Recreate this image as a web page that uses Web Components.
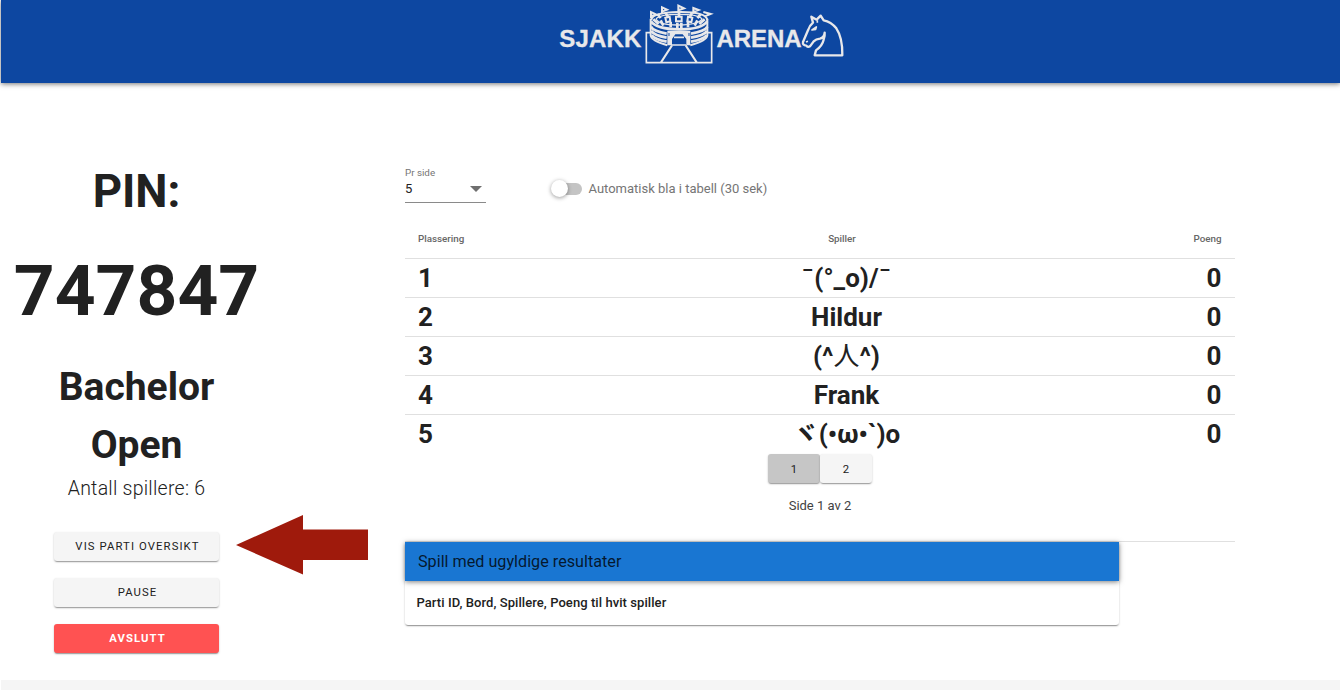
<!DOCTYPE html>
<html lang="no">
<head>
<meta charset="utf-8">
<title>Sjakkarena</title>
<style>
html,body{margin:0;height:100%}
body{font-family:Roboto,"Noto Sans CJK JP",sans-serif;color:#212121;background:#fff;overflow:hidden}
</style>
</head>
<body>
<arena-app></arena-app>
<script>
function define(name, html) {
  const t = document.createElement('template');
  t.innerHTML = html;
  customElements.define(name, class extends HTMLElement {
    constructor() {
      super();
      this.attachShadow({mode: 'open'}).append(t.content.cloneNode(true));
    }
  });
}

define('arena-logo', `
<style>:host{display:block;width:290px;height:66px}svg{display:block}text{font:bold 24px "Liberation Sans",Arial,sans-serif;fill:#e8e8ea;stroke:#e8e8ea;stroke-width:.3px}</style>
<svg width="290" height="66" viewBox="556 0 290 66" fill="none" stroke="#e8e8ea">
  <text x="559.3" y="46.500" textLength="82" lengthAdjust="spacing">SJAKK</text>
  <text x="716.5" y="46.500" textLength="85" lengthAdjust="spacing">ARENA</text>
  <g transform="translate(550 0) scale(.33333)" stroke-width="5">
    <path d="M302 98H289V188H485V98H472" stroke-width="5"/>
    <path d="M333 187L366 136M440 187L407 136" stroke-width="6"/>
    <path d="M352 92H421V136H409V117L398 103H376L366 117V136H352Z" fill="#e8e8ea" stroke="none"/>
    <path d="M357 99V108M417 99V108" stroke="#0d47a1" stroke-width="3"/>
    <path d="M372 112H402M366 135H408" stroke-width="5"/>
    <path d="M302 56V106Q304 122 352 136M472 56V106Q470 122 421 136" stroke-width="6"/>
    <path d="M303 64Q320 87 387 88T472 64M303 80Q310 94 350 101M472 80Q465 94 423 101M304 93Q312 106 350 113M471 93Q463 106 423 113M305 106Q315 118 350 125M470 106Q460 118 423 125" stroke-width="8"/>
    <path d="M304 60Q306 37 387 36T472 60" stroke-width="6"/>
    <path d="M318 57Q328 43 387 43T456 57Q446 74 387 75T318 57" stroke-width="4"/>
    <path d="M310 58L326 72M332 61L340 77M362 66V82M382 68V84M394 68V84M414 66V82M442 61L434 77M464 58L448 72M322 42L332 54M347 39L354 50M387 36V48M426 39L420 50M452 43L442 54" stroke-width="8"/>
    <path d="M346 53L359 50L361 64L349 67ZM378 50H395V64H378ZM414 50L427 53L424 67L412 64Z" stroke-width="6"/>
    <path d="M303 55V36L318 43L305 48M336 41V22L351 29L338 34M385 37V17L402 25L387 30M430 41V24L446 30L432 35M460 36L482 42L464 49" stroke-width="6"/>
  </g>
  <g transform="translate(700 0) scale(.33333)" stroke-width="7" stroke-linejoin="round">
    <path d="M344 166L348 151Q367 137 371 119Q375 109 374 98Q373 113 360 116Q348 117 341 124L330 139Q324 143 319 137Q307 136 309 126L324 91Q329 76 339 68L334 50L350 59L362 47L371 61Q393 65 409 85Q428 113 427 166Z"/>
    <path d="M336 90L349 81L347 88ZM352 61V68M318 126L324 124" stroke-width="5"/>
  </g>
</svg>`);

define('arena-header', `
<style>:host{display:flex;justify-content:center;height:83px;margin-left:1px;padding-left:60px;box-sizing:border-box;background:#0d47a1;box-shadow:0 1px 5px rgba(0,0,0,.55)}</style>
<arena-logo></arena-logo>`);

define('arena-button', `
<style>
:host{display:flex;align-items:center;justify-content:center;box-sizing:border-box;height:29px;border-radius:3px;background:#f5f5f5;color:#212121;font-size:11.3px;font-weight:400;letter-spacing:1.1px;padding:1px 0 0 2px;box-shadow:0 2px 1px -1px rgba(0,0,0,.22),0 1px 2px rgba(0,0,0,.25)}
:host([kind=danger]){background:#ff5252;color:#fff;font-weight:700;padding-top:0}
:host([kind=page]){width:52px;letter-spacing:0;padding:1px 0 0}
:host([active]){background:#c6c6c6}
</style><slot></slot>`);

define('arena-arrow', `
<style>:host{position:absolute;left:235px;top:515px;display:block}svg{display:block}</style>
<svg width="134" height="60"><path d="M1 30L68 0V14.500H133V45H68V59.500Z" fill="#9f1a0c"/></svg>`);

define('arena-sidebar', `
<style>
:host{display:flex;flex-direction:column;align-items:center;width:273px;padding-top:78px;box-sizing:border-box;flex:none}
h1,h2{margin:0;font-weight:700;text-align:center}
.label{font-size:45.6px;line-height:62px}
.pin{font-size:71.300px;line-height:98px;margin-top:19px}
h2{font-size:39px;line-height:58px;width:200px;margin-top:18px}
p{margin:0;font-size:19.500px;line-height:28px;font-weight:300;letter-spacing:.24px;padding-top:1px}
.actions{display:flex;flex-direction:column;gap:17px;width:165px;margin-top:28.500px}
</style>
<h1 class="label">PIN:</h1>
<h1 class="pin">747847</h1>
<h2>Bachelor Open</h2>
<p>Antall spillere: 6</p>
<div class="actions">
<arena-button>VIS PARTI OVERSIKT</arena-button>
<arena-button>PAUSE</arena-button>
<arena-button kind="danger">AVSLUTT</arena-button>
</div>`);

define('arena-select', `
<style>
:host{display:block;width:81px;height:37px;border-bottom:1px solid #8a8a8a;box-sizing:border-box}
small{display:block;font-size:9.800px;line-height:13px;color:#757575}
div{display:flex;justify-content:space-between;align-items:center;font-size:13px;line-height:20px;padding-right:4px}
</style><small>Pr side</small><div><span>5</span><svg width="12" height="6"><path d="M0 0H12L6 6Z" fill="#6f6f6f"/></svg></div>`);

define('arena-switch', `
<style>
:host{display:flex;align-items:center;gap:6.500px;font-size:13px;color:#757575}
.track{display:flex;align-items:center;width:28px;height:12px;border-radius:6px;background:#c4c4c4;margin-left:3px}
.thumb{flex:none;width:17px;height:17px;border-radius:50%;background:#fff;margin-left:-3px;box-shadow:0 1px 4px rgba(0,0,0,.4)}
</style><span class="track"><span class="thumb"></span></span><slot></slot>`);

define('arena-row', `
<style>
:host{display:grid;grid-template-columns:200px 1fr 200px;align-items:center;height:39px;box-sizing:border-box;padding:0 13.500px 0 13px;border-top:1px solid #e0e0e0;font-size:26px;font-weight:700;line-height:38px}
.c{text-align:center;padding-left:53.500px;white-space:nowrap;height:38px}.r{text-align:right}
:host([head]){border:0;height:39px;font-size:9.800px;color:#666;font-weight:500}
:host([head]) .c{padding-left:44.500px}
</style><slot name="place"></slot><div class="c"><slot></slot></div><div class="r"><slot name="score"></slot></div>`);

define('arena-card', `
<style>
:host{display:block;width:714px;height:83px;border-radius:3px;background:#fff;box-shadow:0 2px 1px -1px rgba(0,0,0,.25),0 1px 2px rgba(0,0,0,.25)}
header{height:39px;line-height:39px;padding-left:13px;font-size:16.200px;background:#1976d2;color:rgba(0,0,0,.8);box-shadow:0 1px 5px rgba(0,0,0,.5)}
div{padding-left:11.500px;line-height:44px;font-size:13px;letter-spacing:.07px;font-weight:500}
</style><header><slot name="title"></slot></header><div><slot></slot></div>`);

define('arena-main', `
<style>
:host{display:block;margin-left:132px;width:830px;padding-top:83px}
.controls{display:flex;gap:65px;height:53px}
arena-switch{height:45px}
.pager{display:flex;justify-content:center}
.foot{height:88px;border-bottom:1px solid #e0e0e0;margin-top:1px;box-sizing:border-box}
.cjk{line-height:0}.thin{font-weight:400}
p{margin:0;text-align:center;font-size:13px;line-height:20px;padding-top:13px;color:#424242}
</style>
<div class="controls"><arena-select></arena-select><arena-switch>Automatisk bla i tabell (30 sek)</arena-switch></div>
<arena-row head><span slot="place">Plassering</span>Spiller<span slot="score">Poeng</span></arena-row>
<arena-row><span slot="place">1</span>¯(°_o)/¯<span slot="score">0</span></arena-row>
<arena-row><span slot="place">2</span>Hildur<span slot="score">0</span></arena-row>
<arena-row><span slot="place">3</span>(^<span class="cjk thin">人</span>^)<span slot="score">0</span></arena-row>
<arena-row><span slot="place">4</span>Frank<span slot="score">0</span></arena-row>
<arena-row><span slot="place">5</span><span class="cjk">ヾ</span>(•ω•\`)o<span slot="score">0</span></arena-row>
<div class="foot"><div class="pager"><arena-button kind="page" active>1</arena-button><arena-button kind="page">2</arena-button></div>
<p>Side 1 av 2</p></div>
<arena-card><span slot="title">Spill med ugyldige resultater</span>Parti ID, Bord, Spillere, Poeng til hvit spiller</arena-card>`);

define('arena-app', `
<style>
:host{display:flex;flex-direction:column;height:690px;position:relative}
main{display:flex;flex:1;min-height:0}
footer{height:10px;margin-left:1px;background:#f5f5f5;flex:none}
arena-header{flex:none}
</style>
<arena-header></arena-header>
<main><arena-sidebar></arena-sidebar><arena-main></arena-main></main>
<footer></footer>
<arena-arrow></arena-arrow>`);
</script>
</body>
</html>
